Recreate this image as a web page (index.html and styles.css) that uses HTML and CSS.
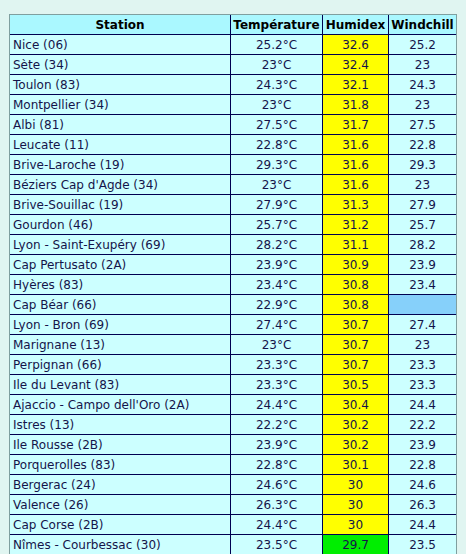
FILE: index.html
```html
<!DOCTYPE html>
<html lang="fr">
<head>
    <meta charset="UTF-8">
    <title>Classement Humidex</title>
    <link rel="stylesheet" href="styles.css">
</head>
<body>
    <table class="releves">
        <colgroup>
            <col class="col-station">
            <col class="col-temp">
            <col class="col-humidex">
            <col class="col-windchill">
        </colgroup>
        <thead>
            <tr>
                <th>Station</th>
                <th>Température</th>
                <th>Humidex</th>
                <th>Windchill</th>
            </tr>
        </thead>
        <tbody>
            <tr><td class="station">Nice (06)</td><td>25.2°C</td><td class="humidex">32.6</td><td>25.2</td></tr>
            <tr><td class="station">Sète (34)</td><td>23°C</td><td class="humidex">32.4</td><td>23</td></tr>
            <tr><td class="station">Toulon (83)</td><td>24.3°C</td><td class="humidex">32.1</td><td>24.3</td></tr>
            <tr><td class="station">Montpellier (34)</td><td>23°C</td><td class="humidex">31.8</td><td>23</td></tr>
            <tr><td class="station">Albi (81)</td><td>27.5°C</td><td class="humidex">31.7</td><td>27.5</td></tr>
            <tr><td class="station">Leucate (11)</td><td>22.8°C</td><td class="humidex">31.6</td><td>22.8</td></tr>
            <tr><td class="station">Brive-Laroche (19)</td><td>29.3°C</td><td class="humidex">31.6</td><td>29.3</td></tr>
            <tr><td class="station">Béziers Cap d'Agde (34)</td><td>23°C</td><td class="humidex">31.6</td><td>23</td></tr>
            <tr><td class="station">Brive-Souillac (19)</td><td>27.9°C</td><td class="humidex">31.3</td><td>27.9</td></tr>
            <tr><td class="station">Gourdon (46)</td><td>25.7°C</td><td class="humidex">31.2</td><td>25.7</td></tr>
            <tr><td class="station">Lyon - Saint-Exupéry (69)</td><td>28.2°C</td><td class="humidex">31.1</td><td>28.2</td></tr>
            <tr><td class="station">Cap Pertusato (2A)</td><td>23.9°C</td><td class="humidex">30.9</td><td>23.9</td></tr>
            <tr><td class="station">Hyères (83)</td><td>23.4°C</td><td class="humidex">30.8</td><td>23.4</td></tr>
            <tr><td class="station">Cap Béar (66)</td><td>22.9°C</td><td class="humidex">30.8</td><td class="vide"></td></tr>
            <tr><td class="station">Lyon - Bron (69)</td><td>27.4°C</td><td class="humidex">30.7</td><td>27.4</td></tr>
            <tr><td class="station">Marignane (13)</td><td>23°C</td><td class="humidex">30.7</td><td>23</td></tr>
            <tr><td class="station">Perpignan (66)</td><td>23.3°C</td><td class="humidex">30.7</td><td>23.3</td></tr>
            <tr><td class="station">Ile du Levant (83)</td><td>23.3°C</td><td class="humidex">30.5</td><td>23.3</td></tr>
            <tr><td class="station">Ajaccio - Campo dell'Oro (2A)</td><td>24.4°C</td><td class="humidex">30.4</td><td>24.4</td></tr>
            <tr><td class="station">Istres (13)</td><td>22.2°C</td><td class="humidex">30.2</td><td>22.2</td></tr>
            <tr><td class="station">Ile Rousse (2B)</td><td>23.9°C</td><td class="humidex">30.2</td><td>23.9</td></tr>
            <tr><td class="station">Porquerolles (83)</td><td>22.8°C</td><td class="humidex">30.1</td><td>22.8</td></tr>
            <tr><td class="station">Bergerac (24)</td><td>24.6°C</td><td class="humidex">30</td><td>24.6</td></tr>
            <tr><td class="station">Valence (26)</td><td>26.3°C</td><td class="humidex">30</td><td>26.3</td></tr>
            <tr><td class="station">Cap Corse (2B)</td><td>24.4°C</td><td class="humidex">30</td><td>24.4</td></tr>
            <tr><td class="station">Nîmes - Courbessac (30)</td><td>23.5°C</td><td class="humidex ok">29.7</td><td>23.5</td></tr>
        </tbody>
    </table>
</body>
</html>
```

FILE: styles.css
```css
body {
    margin: 0;
    padding: 14px 9px;
    background: #e0f5f1;
    font-family: 'DejaVu Sans', Verdana, sans-serif;
    font-size: 12px;
}

.releves {
    width: 448px;
    table-layout: fixed;
    border: 1px solid #7f9f9f;
    border-collapse: separate;
    border-spacing: 0;
    background: #ccffff;
    color: #14144a;
}

.col-station { width: 221px; }
.col-temp { width: 92px; }
.col-humidex { width: 66px; }
.col-windchill { width: 67px; }

.releves th,
.releves td {
    height: 19px;
    padding: 0;
    border-right: 1px solid #000050;
    border-bottom: 1px solid #000050;
    text-align: center;
    white-space: nowrap;
    overflow: hidden;
}

.releves th:last-child,
.releves td:last-child {
    border-right: none;
}

.releves th {
    background: #aaf8ff;
    color: #000;
    font-weight: bold;
}

.releves td.station {
    text-align: left;
    padding-left: 3px;
}

.releves td.humidex {
    background: #ffff00;
}

.releves td.ok {
    background: #00ee00;
}

.releves td.vide {
    background: #86d0fa;
}
```
